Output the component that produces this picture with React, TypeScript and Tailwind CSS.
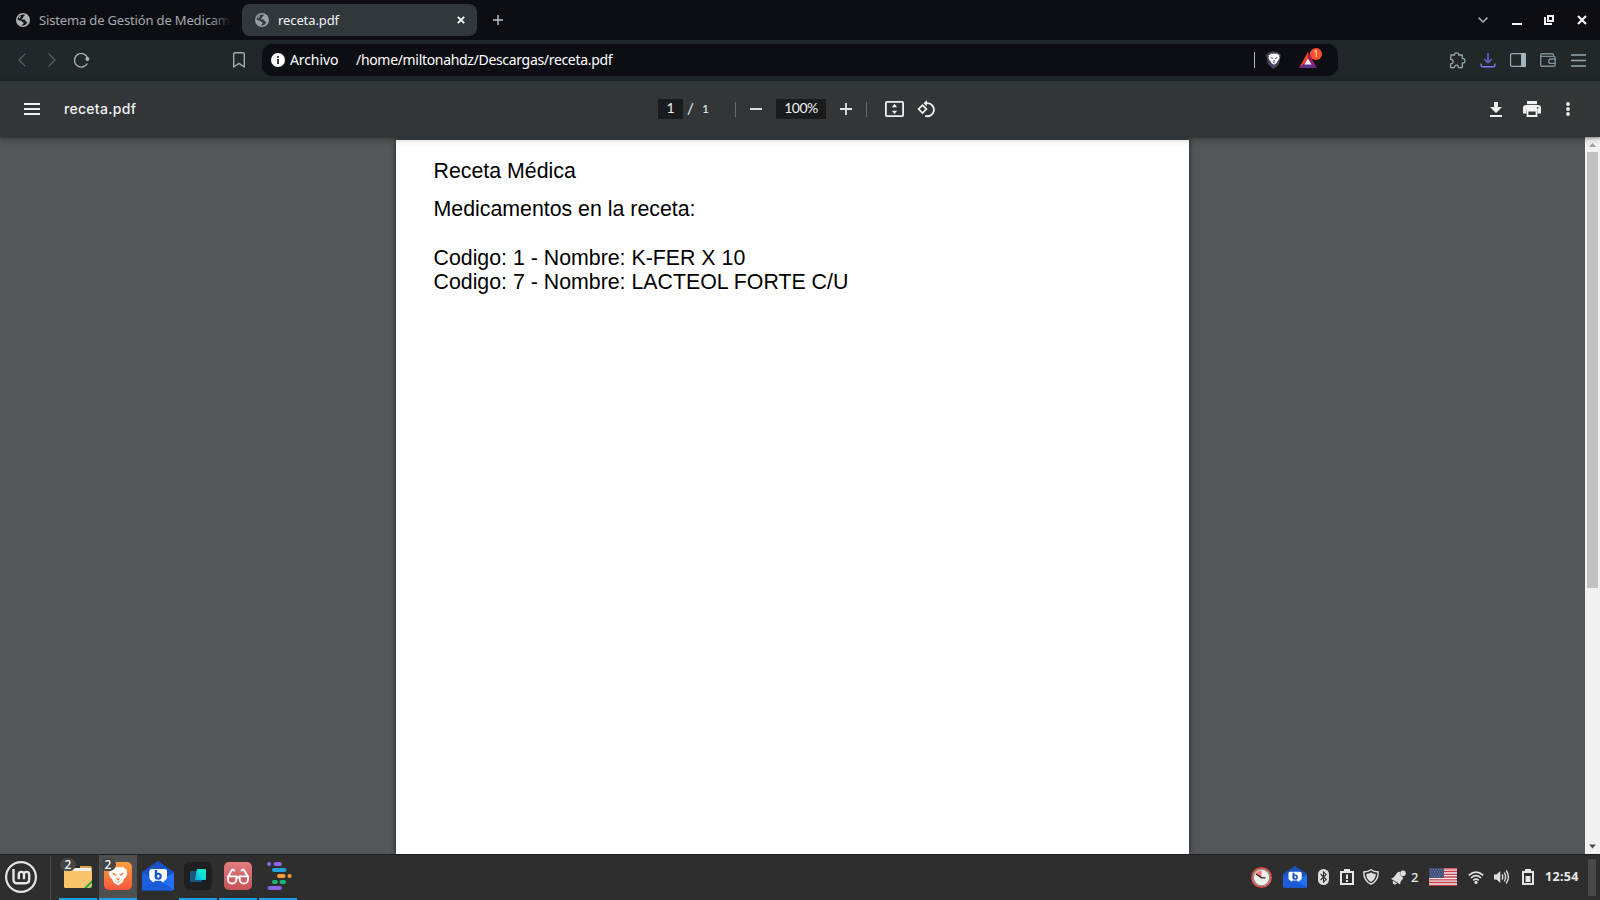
import type { ReactNode } from 'react';

type IconProps = { w: number; h: number; className?: string; children: ReactNode };

function Icon({ w, h, className = '', children }: IconProps) {
  return (
    <svg width={w} height={h} viewBox={`0 0 ${w} ${h}`} fill="none" className={`block shrink-0 ${className}`}>
      {children}
    </svg>
  );
}

function Lion({ className, face }: { className: string; face: string }) {
  return (
    <svg viewBox="0 0 20 20" className={className}>
      <path
        d="M5 .8 7.6 1.6 10 1 12.4 1.6 15 .8 17 2.8 19.2 4.2 18.4 6 19.4 7.6 17.6 11.6 15.8 13.2 14.8 16.2 10 19.4 5.2 16.2 4.2 13.2 2.4 11.6.6 7.6 1.6 6 .8 4.2 3 2.8Z"
        fill="#fff"
      />
      <path
        d="M4.2 6.6 8.6 8.4 8 9.8 5 8.6ZM15.8 6.6 11.4 8.4 12 9.8 15 8.6ZM8.2 11.4 10 12.8 11.8 11.4 11 14 10 14.6 9 14ZM6.6 14.2 10 16 13.4 14.2 10 17Z"
        fill={face}
      />
    </svg>
  );
}

function Globe({ tone, land }: { tone: string; land: string }) {
  return (
    <Icon w={14} h={14}>
      <circle cx="7" cy="7" r="7" fill={tone} />
      <path
        d="M8.6 1.6Q9 2.8 7.6 3.4 6.9 3.8 7.1 4.7 6.9 5.4 5.9 5.5L5.7 6.6H8.2Q9.6 6.8 9.5 8.3 10.9 8.5 11.2 9.8 9.8 12.2 7.3 12.5 6 12.6 6 12L7.6 10.6 7.4 9.2Q6 9 5.6 7.9L3.4 7.4 1.5 6.4Q2 3.8 4 2.6 6 1.3 8.6 1.6Z"
        fill={land}
      />
      <path d="M2.6 4.6Q3.4 3.2 5.2 2.6L4.6 4 3.2 5.4Z" fill={tone} />
    </Icon>
  );
}

function TabStrip() {
  return (
    <div className="flex h-10 items-center bg-[#0d0e13]">
      <div className="flex h-8 w-[242px] items-center pl-4">
        <Globe tone="#adb0b5" land="#15171b" />
        <div className="relative ml-[9px] w-[200px]">
          <span className="block text-[13px] leading-5 tracking-[-0.16px] whitespace-nowrap text-[#a6a9ad]">
            Sistema de Gestión de Medicame
          </span>
          <span className="absolute inset-y-0 right-2 w-5 bg-linear-to-r from-transparent to-[#0d0e13]" />
          <span className="absolute inset-y-0 right-0 w-2 bg-[#0d0e13]" />
        </div>
      </div>
      <div className="flex h-8 w-[235px] items-center rounded-lg bg-[#30383c] pr-3 pl-[13px]">
        <Globe tone="#9a9fa6" land="#353c41" />
        <span className="ml-[9px] text-[13px] leading-5 tracking-[-0.1px] text-[#f0f1f2]">receta.pdf</span>
        <Icon w={8} h={8} className="ml-auto">
          <path d="M.8.8 7.2 7.2M7.2.8.8 7.2" stroke="#fff" strokeWidth="1.7" />
        </Icon>
      </div>
      <Icon w={10} h={10} className="ml-4">
        <path d="M5 0V10M0 5H10" stroke="#c3c6ca" strokeWidth="1.4" />
      </Icon>
      <div className="ml-auto flex items-center pr-[13px]">
        <Icon w={10} h={6} className="text-[#a3b0b8]">
          <path d="M.6.6 5 5 9.4.6" stroke="currentColor" strokeWidth="1.5" />
        </Icon>
        <Icon w={10} h={10} className="ml-6">
          <path d="M0 8H10V10H0Z" fill="#f4f4f5" />
        </Icon>
        <Icon w={10} h={10} className="ml-[22px]">
          <path d="M4 1H9V6H4Z" stroke="#f4f4f5" strokeWidth="2" />
          <path d="M0 2H2V8H8V10H0Z" fill="#f4f4f5" />
        </Icon>
        <Icon w={10} h={10} className="ml-[23px]">
          <path d="M1 1 9 9M9 1 1 9" stroke="#f4f4f5" strokeWidth="2.2" />
        </Icon>
      </div>
    </div>
  );
}

function AddressRow() {
  return (
    <div className="flex h-[41px] items-center bg-[#22272a] pb-px">
      <Icon w={8} h={14} className="ml-[18px] text-[#5a6469]">
        <path d="M7.4.6 1 7l6.4 6.4" stroke="currentColor" strokeWidth="1.2" />
      </Icon>
      <Icon w={8} h={14} className="ml-[22px] text-[#5a6469]">
        <path d="M.6.6 7 7 .6 13.4" stroke="currentColor" strokeWidth="1.2" />
      </Icon>
      <Icon w={16} h={15} className="ml-[18px] text-[#a3b5be]">
        <path d="M13.7 5A6.8 6.8 0 1 0 13.3 10.5" stroke="currentColor" strokeWidth="1.3" />
        <circle cx="13.4" cy="6" r="2" fill="currentColor" />
      </Icon>
      <Icon w={12} h={16} className="ml-[143px] text-[#9badb6]">
        <path d="M.7 2.2Q.7.7 2.2.7H9.8Q11.3.7 11.3 2.2V15L6 11.4.7 15Z" stroke="currentColor" strokeWidth="1.4" strokeLinejoin="round" />
      </Icon>
      <div className="ml-[17px] flex h-8 w-[1076px] items-center rounded-[10px] bg-[#0d0e13] pl-[9px] text-white">
        <Icon w={14} h={14}>
          <circle cx="7" cy="7" r="7" fill="#fff" />
          <path d="M6.1 3H7.9V4.7H6.1ZM6.1 6H7.9V11H6.1Z" fill="#222529" />
        </Icon>
        <span className="ml-[5px] w-[66px] text-[14px] leading-5 tracking-[-0.1px]">Archivo</span>
        <span className="text-[14px] leading-5 tracking-[-0.32px]">/home/miltonahdz/Descargas/receta.pdf</span>
        <span className="ml-auto h-4 w-px bg-[#b5b6b8]" />
        <div className="relative ml-[11px] h-[18px] w-[15px]">
          <Icon w={15} h={18}>
            <path d="M3 1.6 7.5.2 12 1.6 14.8 3.6 13.4 12Q12.6 14.4 7.5 17.9 2.4 14.4 1.6 12L.2 3.6Z" fill="#47465c" />
          </Icon>
          <Lion className="absolute top-[2px] left-[1.5px] size-3" face="#47465c" />
        </div>
        <div className="relative mr-[21px] ml-[18px] h-4 w-[18px]">
          <Icon w={18} h={16}>
            <path d="M9 0 0 16 9 9Z" fill="#ff4724" />
            <path d="M9 0 18 16 9 9Z" fill="#9e1f63" />
            <path d="M0 16H18L9 8Z" fill="#662d91" />
            <path d="M9 6.8 12.6 12.6H5.4Z" fill="#fff" />
          </Icon>
          <span className="absolute -top-1 left-[11px] flex size-3 items-center justify-center rounded-full bg-[#ff5029] text-[8px] leading-none text-white">
            1
          </span>
        </div>
      </div>
      <div className="ml-auto flex items-center pr-[14px] text-[#96a8b1]">
        <Icon w={17} h={17}>
          <path
            d="M2 3H5.6Q5 .8 7.6.8T9.6 3H13.3V6.5Q16 6.2 16 8.7T13.3 11V15.6H9.4Q9.6 13.2 7.5 13.2T5.5 15.6H1.6V11.8Q4.2 11.8 4.2 9.6T1.6 7.4Z"
            stroke="currentColor"
            strokeWidth="1.3"
            strokeLinejoin="round"
          />
        </Icon>
        <Icon w={16} h={15} className="ml-[14px]">
          <path d="M8 0V9.5M4.2 6 8 9.8 11.8 6" stroke="#6e66d9" strokeWidth="1.5" />
          <path d="M1 10.4V12Q1 13.7 2.8 13.7H13.2Q15 13.7 15 12V10.4" stroke="#8478f0" strokeWidth="1.4" />
        </Icon>
        <Icon w={16} h={14} className="ml-[14px]">
          <rect x=".6" y=".6" width="14.8" height="12.8" rx="1" stroke="currentColor" strokeWidth="1.2" />
          <path d="M11 0H15Q16 0 16 1V13Q16 14 15 14H11Z" fill="#a4b5bd" />
        </Icon>
        <Icon w={16} h={14} className="ml-[14px] text-[#7d8e96]">
          <path d="M13.5 3V2Q13.5.7 12 .7H2.2Q.7.7.7 2V11.4Q.7 13.3 2.5 13.3H13.6Q15.2 13.3 15.2 11.8V5Q15.2 3.4 13.6 3.4H2.2Q.7 3.4.7 2" stroke="currentColor" strokeWidth="1.4" />
          <path d="M15.2 6H11Q8.7 6 8.7 8.2T11 10.4H15.2" stroke="currentColor" strokeWidth="1.4" />
        </Icon>
        <Icon w={15} h={13} className="ml-[15px]">
          <path d="M0 1H15M0 6.5H15M0 12H15" stroke="currentColor" strokeWidth="1.3" />
        </Icon>
      </div>
    </div>
  );
}

function ViewerToolbar() {
  return (
    <div className="relative z-10 flex h-14 items-center bg-[#323639] font-['Lato','Inter',sans-serif] text-[#f1f1f1] shadow-[0_-2px_8px_rgba(0,0,0,0.09),0_4px_8px_rgba(0,0,0,0.06),0_1px_2px_rgba(0,0,0,0.3),0_2px_6px_rgba(0,0,0,0.15)]">
      <Icon w={16} h={12} className="ml-6">
        <path d="M0 1H16M0 6H16M0 11H16" stroke="#f1f1f1" strokeWidth="2" />
      </Icon>
      <span className="ml-6 w-[594px] font-['Inter',sans-serif] text-[14px] leading-5 font-medium tracking-[0.3px]">receta.pdf</span>
      <span className="flex h-5 w-[25px] items-center justify-center bg-[#191b1c] pb-1 text-[14px]">1</span>
      <span className="ml-[4px] w-[15px] pb-0.5 text-[15px] leading-5">/</span>
      <span className="mr-px w-[31px] text-[12px] leading-5">1</span>
      <span className="ml-px h-[15px] w-px bg-[#6a6d70]" />
      <Icon w={12} h={12} className="ml-[14px]">
        <path d="M0 6H12" stroke="#d9dadb" strokeWidth="2" />
      </Icon>
      <span className="ml-[14px] flex h-5 w-[50px] items-center justify-center bg-[#191b1c] pb-1 text-[14px] tracking-[-0.5px]">100%</span>
      <Icon w={12} h={12} className="ml-[14px]">
        <path d="M0 6H12M6 0V12" stroke="#e4e5e5" strokeWidth="1.8" />
      </Icon>
      <span className="ml-[14px] h-[15px] w-px bg-[#6a6d70]" />
      <Icon w={19} h={16} className="ml-[18px]">
        <rect x=".9" y=".9" width="17.2" height="14.2" rx="1" stroke="#f1f1f1" strokeWidth="1.8" />
        <path d="M9.5 2.8 12.1 6.2H6.9ZM9.5 13.2 12.1 9.8H6.9Z" fill="#f1f1f1" />
      </Icon>
      <Icon w={18} h={18} className="ml-[13px]">
        <path d="M5.5 5.2 9.4 9.1 5.5 13 1.6 9.1Z" stroke="#f1f1f1" strokeWidth="1.7" />
        <path d="M9 3.2H10.5A6.5 6.5 0 1 1 8.2 15.8" stroke="#f1f1f1" strokeWidth="1.8" />
        <path d="M9.8 0V6.4L6.6 3.2Z" fill="#f1f1f1" />
      </Icon>
      <Icon w={12} h={15} className="ml-auto">
        <path d="M4 0H8V5H12L6 11 0 5H4ZM0 13H12V15H0Z" fill="#f1f1f1" />
      </Icon>
      <Icon w={18} h={16} className="ml-[21px]">
        <path d="M4 0H14V3.2H4Z" fill="#f1f1f1" />
        <path d="M3 4H15Q18 4 18 7V12.5H14.5V9H3.5V12.5H0V7Q0 4 3 4Z" fill="#f1f1f1" />
        <path d="M4.5 9.5H13.5V15H4.5Z" stroke="#f1f1f1" strokeWidth="1.8" />
        <circle cx="14.7" cy="6.8" r=".9" fill="#323639" />
      </Icon>
      <Icon w={4} h={14} className="mr-[30px] ml-[25px]">
        <circle cx="2" cy="2" r="1.9" fill="#f1f1f1" />
        <circle cx="2" cy="7" r="1.9" fill="#f1f1f1" />
        <circle cx="2" cy="12" r="1.9" fill="#f1f1f1" />
      </Icon>
    </div>
  );
}

function Viewer() {
  return (
    <div className="flex min-h-0 flex-1 bg-[#525659]">
      <div className="flex flex-1 overflow-hidden pt-[3px] pl-[396px]">
        <article className="w-[793px] bg-white pt-[19px] pl-[37.5px] font-['Liberation_Sans',Arial,sans-serif] text-[21.33px] leading-6 text-black shadow-[0_0_5px_rgba(25,30,35,0.9)]">
          <h1 className="mb-[14px]">Receta Médica</h1>
          <p className="mb-[25px]">Medicamentos en la receta:</p>
          <p>Codigo: 1 - Nombre: K-FER X 10</p>
          <p>Codigo: 7 - Nombre: LACTEOL FORTE C/U</p>
        </article>
      </div>
      <div className="flex w-[15px] flex-col items-center bg-[#f1f1f1]">
        <Icon w={15} h={15}>
          <path d="M7.5 6 11 10H4Z" fill="#a0a0a0" />
        </Icon>
        <div className="h-[436px] w-[11px] bg-[#c1c1c1]" />
        <Icon w={15} h={15} className="mt-auto">
          <path d="M4 5.5H11L7.5 9.5Z" fill="#505050" />
        </Icon>
      </div>
    </div>
  );
}

function Mail({ className = '', size }: { className?: string; size: 'lg' | 'sm' }) {
  const [w, h] = size === 'lg' ? [32, 30] : [24, 22];
  return (
    <svg width={w} height={h} viewBox="0 0 32 30" preserveAspectRatio="none" className={`block shrink-0 ${className}`}>
      <path d="M0 11 16 0 32 11V28Q32 29.5 30.5 29.5H1.5Q0 29.5 0 28Z" fill="#1a52c4" />
      <path d="M0 12 16 20 0 29Z" fill="#1c5fdd" />
      <path d="M32 12 16 20 32 29Z" fill="#2571f5" />
      <path d="M0 28.5 14 20Q16 18.8 18 20L32 28.5Q31.6 29.5 30 29.5H2Q.4 29.5 0 28.5Z" fill="#1b5cd8" />
      <path d="M9.5 8H22.5Q25 8 25 10.5V16.5Q24.8 18.6 22.5 19.8L21 21.5 18.8 19.8H13.2L11 21.5 9.5 19.8Q7.4 18.6 7.3 16.5V10.5Q7.3 8 9.5 8Z" fill="#fff" />
      <path d="M14 9V16.5" stroke="#1854c9" strokeWidth="2.4" fill="none" />
      <circle cx="16.2" cy="15.2" r="2.5" stroke="#1854c9" strokeWidth="2.1" fill="none" />
    </svg>
  );
}

function TaskItem({ active = false, running = true, count, children }: { active?: boolean; running?: boolean; count?: string; children: ReactNode }) {
  return (
    <div
      className={`relative flex h-[45px] w-[38px] shrink-0 items-center justify-center border-b-2 pb-px ${running ? 'border-[#1f9ede]' : 'border-transparent'} ${active ? 'bg-[#505050]' : ''}`}
    >
      {children}
      {count && (
        <span className="absolute top-[3px] left-px flex h-[13px] w-4 items-center justify-center rounded-full bg-[#444546] text-[12px] leading-none font-medium text-[#f2f2f2]">
          {count}
        </span>
      )}
    </div>
  );
}

function Flag() {
  return (
    <Icon w={28} h={18}>
      <path d="M0 0H28V18H0Z" fill="#f0eeee" />
      <path d="M0 .8H28M0 3.5H28M0 6.3H28M0 9H28M0 11.8H28M0 14.5H28M0 17.3H28" stroke="#c93a45" strokeWidth="1.35" />
      <path d="M0 0H15V10H0Z" fill="#3f4e79" />
      <path d="M1.5 1.7H15M2.5 3.9H15M1.5 6.1H15M2.5 8.3H15" stroke="#8b95b2" strokeWidth=".9" strokeDasharray="1 1.5" />
    </Icon>
  );
}

function Taskbar() {
  return (
    <div className="flex h-[46px] shrink-0 items-center border-t border-[#1d1d1d] bg-[#2e2e2e] text-[#e8e8e8]">
      <Icon w={32} h={32} className="mb-px ml-[5px]">
        <circle cx="16" cy="16" r="14.9" stroke="#e6e6e6" strokeWidth="2.2" />
        <path
          d="M8.5 8V18.4Q8.5 22.2 12.3 22.2H20.2Q24.2 22.2 24.2 18.2V13.5A2.6 2.6 0 0 0 19 13.5V18.2M19 13.5A2.6 2.6 0 0 0 13.8 13.5V18.2"
          stroke="#e6e6e6"
          strokeWidth="2.4"
        />
      </Icon>
      <span className="ml-[13px] h-11 w-px bg-[#4c4c4c]" />
      <div className="ml-2 flex gap-0.5">
        <TaskItem count="2">
          <Icon w={28} h={24} className="mt-[2px]">
            <path d="M16 1H26Q28 1 28 3V10H16Z" fill="#d9a54f" />
            <path d="M1 3H27V8H1Z" fill="#efeeec" />
            <path d="M0 4H8L10 6H26Q28 6 28 8V21.5Q28 23 26.5 23H1.5Q0 23 0 21.5Z" fill="#fac46c" />
            <path d="M20 23 28 15V18L23 23ZM25.5 23 28 20.5V23Z" fill="#2fa84d" />
          </Icon>
        </TaskItem>
        <TaskItem active count="2">
          <span className="flex size-7 items-center justify-center rounded-[5px] bg-linear-to-b from-[#f9a03c] to-[#f8543a]">
            <Lion className="size-[20px]" face="#f97a3a" />
          </span>
        </TaskItem>
        <TaskItem running={false}>
          <Mail size="lg" />
        </TaskItem>
        <TaskItem>
          <Icon w={28} h={28}>
            <rect width="28" height="28" rx="6" fill="#1e1f20" />
            <rect x="6" y="9" width="12" height="11" rx="1" fill="#1c5680" />
            <path d="M13 7H21Q22 7 22 8V17Q22 18 21 18H11Z" fill="url(#teal)" />
            <defs>
              <linearGradient id="teal" x1="11" y1="18" x2="22" y2="7" gradientUnits="userSpaceOnUse">
                <stop stopColor="#0aa6dc" />
                <stop offset=".5" stopColor="#14dcdc" />
                <stop offset="1" stopColor="#0ff0c4" />
              </linearGradient>
            </defs>
          </Icon>
        </TaskItem>
        <TaskItem>
          <Icon w={28} h={28}>
            <rect width="28" height="28" rx="5" fill="url(#rose)" />
            <path
              d="M4 14.4H12.3V17.4A4.1 4.1 0 0 1 4 17.4ZM15.7 14.4H24V17.4A4.1 4.1 0 0 1 15.7 17.4ZM12.3 16Q14 14.6 15.7 16M4.2 14.4 8 8Q9 6.8 10.4 8.6M23.8 14.4 20 8Q19 6.8 17.6 8.6"
              stroke="#fff"
              strokeWidth="1.9"
              strokeLinecap="round"
            />
            <defs>
              <linearGradient id="rose" x1="0" y1="0" x2="0" y2="28" gradientUnits="userSpaceOnUse">
                <stop stopColor="#e07d7d" />
                <stop offset="1" stopColor="#c75156" />
              </linearGradient>
            </defs>
          </Icon>
        </TaskItem>
        <TaskItem>
          <Icon w={26} h={28} className="ml-[2px]">
            <g strokeWidth="4" strokeLinecap="round">
              <path d="M3 2H3.1M9.5 2H14M3.5 26H14" stroke="#8f62e6" />
              <path d="M8 8H18.5" stroke="#22a3e0" />
              <path d="M13 14H17.5M23.5 14H23.6" stroke="#f99a38" />
              <path d="M8 20H9.7M15.5 20H18" stroke="#1bb673" />
            </g>
          </Icon>
        </TaskItem>
      </div>
      <div className="ml-auto flex items-center pb-px">
        <Icon w={21} h={21}>
          <circle cx="10.5" cy="10.5" r="9.6" fill="#f0efe9" stroke="#db4744" strokeWidth="1.7" />
          <circle cx="10.5" cy="10.5" r="8.2" stroke="#858984" strokeWidth="1.1" />
          <path d="M10.5 10.5 4.5 7Q6.5 3.5 10.5 3.4Z" fill="#f07d7a" />
          <path d="M5 7 10.5 10.8H14.5" stroke="#222" strokeWidth="1.3" />
        </Icon>
        <Mail size="sm" className="ml-[11px]" />
        <Icon w={11} h={16} className="ml-[11px]">
          <rect width="11" height="16" rx="5.5" fill="#dededf" />
          <path d="M2.6 5 8.2 10.6 5.5 13V3L8.2 5.4 2.6 11" stroke="#2e2e2e" strokeWidth="1.1" />
        </Icon>
        <Icon w={14} h={16} className="ml-[11px]">
          <path d="M1 3H13V15H1Z" stroke="#e6e6e6" strokeWidth="2" />
          <path d="M4 0H10V4H4ZM6 5.5H8V10H6ZM6 11H8V13H6Z" fill="#e6e6e6" />
        </Icon>
        <Icon w={16} h={16} className="ml-[9px]">
          <path d="M8 .7Q11 2.8 15.2 3 15.4 11.6 8 15.2 .6 11.6 .8 3 5 2.8 8 .7Z" stroke="#dededf" strokeWidth="1.4" />
          <path d="M8 3.4Q10 4.8 12.8 5 12.7 10.4 8 13 3.3 10.4 3.2 5 6 4.8 8 3.4Z" fill="#dededf" />
        </Icon>
        <Icon w={15} h={15} className="ml-[12px]">
          <g fill="#dededf">
            <path d="M0 8.8Q3.6 7.4 5.2 4 6.6 1.4 9 1.9 8.2 5.6 11.8 6.8 12.6 9 10.4 10.6 9 11.8 9.2 14.6Z" />
            <circle cx="12" cy="3.2" r="2.8" />
            <path d="M2 10.8 6 13.4Q4.4 15.2 2.8 14.2T2 10.8Z" />
          </g>
        </Icon>
        <span className="ml-[5px] w-[18px] text-[13px] leading-5 font-medium">2</span>
        <Flag />
        <Icon w={16} h={13} className="ml-[11px]">
          <g stroke="#dededf">
            <path d="M.8 4.4Q8-2 15.2 4.4" strokeWidth="1.7" />
            <path d="M3 6.9Q8 2.4 13 6.9" strokeWidth="1.6" />
            <path d="M5.2 9.3Q8 6.8 10.8 9.3" strokeWidth="1.6" />
          </g>
          <circle cx="8" cy="11.4" r="1.6" fill="#dededf" />
        </Icon>
        <Icon w={16} h={14} className="ml-[10px]">
          <path d="M0 4.5H2.5L6.3 1V13L2.5 9.5H0Z" fill="#dededf" />
          <path d="M8 4.5Q9.6 7 8 9.5M10.2 2.5Q13 7 10.2 11.5M12.2.5Q16.6 7 12.2 13.5" stroke="#dededf" strokeWidth="1.4" />
        </Icon>
        <Icon w={12} h={16} className="ml-[12px]">
          <path d="M1 3H11V15H1Z" stroke="#e6e6e6" strokeWidth="2" />
          <path d="M3 0H9V3H3ZM3.5 7H8.5V13H3.5Z" fill="#e6e6e6" />
        </Icon>
        <span className="ml-[11px] w-[43px] text-[12.5px] leading-5 font-bold tracking-[0.3px] whitespace-nowrap">12:54</span>
        <span className="mr-1 h-[37px] w-2 bg-[#494949]" />
      </div>
    </div>
  );
}

export default function App() {
  return (
    <div className="flex h-[900px] w-[1600px] flex-col overflow-hidden font-['Noto_Sans',sans-serif]">
      <TabStrip />
      <AddressRow />
      <ViewerToolbar />
      <Viewer />
      <Taskbar />
    </div>
  );
}
